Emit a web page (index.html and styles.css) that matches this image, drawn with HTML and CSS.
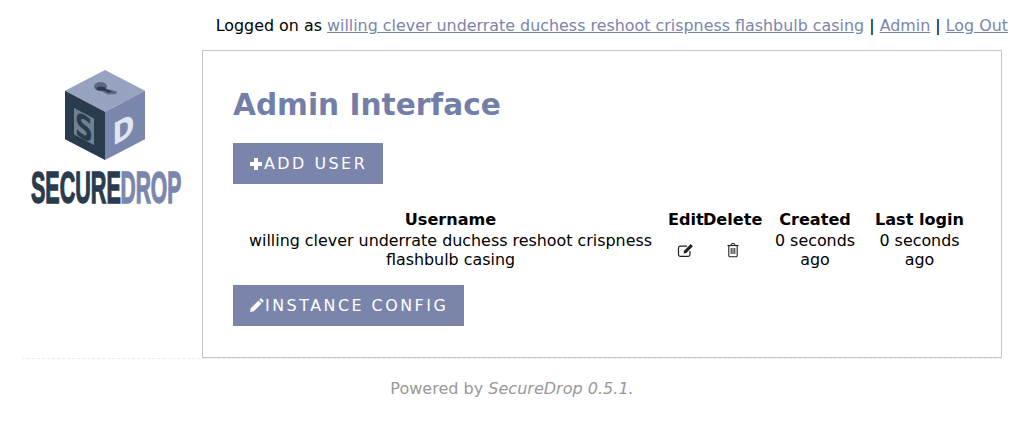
FILE: index.html
```html
<!DOCTYPE html>
<html lang="en">
<head>
<meta charset="utf-8">
<title>SecureDrop | Admin Interface</title>
<link rel="stylesheet" href="styles.css">
</head>
<body>
<header class="topbar">Logged on as <a href="#">willing clever underrate duchess reshoot crispness flashbulb casing</a> | <a href="#">Admin</a> | <a href="#">Log Out</a></header>
<div class="container">
  <aside class="sidebar">
    <svg class="logo" width="180" height="166" viewBox="22 50 180 166" role="img" aria-label="SecureDrop logo">
      <polygon points="105,70 145,90.7 105,111.7 65,90.7" fill="#98a3c1"/>
      <polygon points="65,90.7 105,111.7 105,160 65,139.3" fill="#2a3b4d"/>
      <polygon points="145,90.7 105,111.7 105,160 145,139.3" fill="#7b86ac"/>
      <ellipse cx="100.5" cy="86.5" rx="6.5" ry="4.5" fill="#5a6785"/>
      <polygon points="100,87 117,91.5 116,94 108,94.5 101,91" fill="#5a6785"/>
      <ellipse cx="101" cy="88.5" rx="4.5" ry="2" fill="#2a3b4d"/>
      <polygon points="103,88 112,91.5 109,92.5 103,90" fill="#2a3b4d"/>
      <polygon points="74,108 94,118.5 94,145 74,134.5" fill="#6d8290"/>
      <text class="logo-cube-s" transform="matrix(1.25 0.65 0 1.65 75 134.5)">S</text>
      <text class="logo-cube-d" transform="matrix(1.32 -0.73 0 1.5 112.5 146)">D</text>
      <text class="logo-word logo-dark" transform="matrix(0.49 0 0 1 31 203.3)">SECURE</text>
      <text class="logo-word logo-light" transform="matrix(0.478 0 0 1 120.5 203.3)">DROP</text>
    </svg>
  </aside>
  <main class="panel">
    <h1 class="title">Admin Interface</h1>
    <a class="btn btn-add" href="#">
      <svg class="btn-icon" width="14" height="14" viewBox="0 0 14 14"><path d="M5 1h4v4h4v4H9v4H5V9H1V5h4z" fill="#fff"/></svg>ADD USER
    </a>
    <table class="users">
      <colgroup>
        <col class="col-name"><col class="col-edit"><col class="col-del"><col class="col-created"><col class="col-login">
      </colgroup>
      <thead>
        <tr><th>Username</th><th>Edit</th><th>Delete</th><th>Created</th><th>Last login</th></tr>
      </thead>
      <tbody>
        <tr>
          <td>willing clever underrate duchess reshoot crispness flashbulb casing</td>
          <td><svg width="18" height="16" viewBox="0 0 18 16"><path d="M13 9v3.5a1.8 1.8 0 0 1-1.8 1.8H3.3a1.8 1.8 0 0 1-1.8-1.8V6a1.8 1.8 0 0 1 1.8-1.8H10" fill="none" stroke="#222" stroke-width="1.2"/><path d="M6.5 11.5l.6-2.8 6.6-6.6 2.2 2.2-6.6 6.6z" fill="#222"/></svg></td>
          <td><svg width="14" height="16" viewBox="0 0 14 16"><path d="M5 3l.7-1.5h2.6L9 3" fill="none" stroke="#222" stroke-width="1"/><path d="M1.5 3.5h11" stroke="#222" stroke-width="1.2"/><path d="M2.8 3.5v10a1.2 1.2 0 0 0 1.2 1.2h6a1.2 1.2 0 0 0 1.2-1.2v-10" fill="none" stroke="#222" stroke-width="1.1"/><path d="M5.2 6v6M7 6v6M8.8 6v6" stroke="#222" stroke-width="1"/></svg></td>
          <td>0 seconds ago</td>
          <td>0 seconds ago</td>
        </tr>
      </tbody>
    </table>
    <a class="btn btn-config" href="#">
      <svg class="btn-icon" width="15" height="15" viewBox="0 0 15 15"><path d="M1 14l.8-3.8 7.7-7.7 3 3-7.7 7.7zM10.3 1.7l1-1a1 1 0 0 1 1.4 0l1.6 1.6a1 1 0 0 1 0 1.4l-1 1z" fill="#fff"/></svg>INSTANCE CONFIG
    </a>
  </main>
</div>
<footer class="footer">Powered by <em>SecureDrop 0.5.1.</em></footer>
</body>
</html>
```
FILE: styles.css
```css
* { box-sizing: border-box; }
html, body { margin: 0; padding: 0; }
body {
  background: #fff;
  color: #000;
  font-family: "DejaVu Sans", sans-serif;
  font-size: 15.9px;
  line-height: 19px;
}
a { color: #7b85ab; }
.topbar {
  height: 50px;
  padding: 16px 16px 0 0;
  text-align: right;
}
.container {
  display: flex;
  align-items: flex-start;
  width: 980px;
  margin-left: 22px;
  height: 309px;
  border-bottom: 1px dashed #eee;
}
.sidebar { width: 180px; flex: none; }
.logo { display: block; }
.logo-cube-s { font: bold 20px "DejaVu Sans", sans-serif; fill: #2a3b4d; }
.logo-cube-d { font: bold 20px "DejaVu Sans", sans-serif; fill: #e0e5f0; }
.logo-word { font: bold 44px "Liberation Sans", sans-serif; stroke-width: 1.4px; }
.logo-dark { fill: #2a3b4d; stroke: #2a3b4d; }
.logo-light { fill: #7b86ac; stroke: #7b86ac; }
.panel {
  flex: none;
  width: 800px;
  height: 308px;
  border: 1px solid #c4c4c4;
  padding: 37px 30px 0;
  background: #fff;
}
.title {
  margin: 0 0 21px;
  color: #747fa9;
  font-size: 29.6px;
  line-height: 34px;
  font-weight: bold;
}
.btn {
  display: flex;
  align-items: center;
  gap: 1px;
  width: max-content;
  background: #7b85ab;
  color: #fff;
  text-decoration: none;
  letter-spacing: 2.5px;
  line-height: 19px;
}
.btn-add { height: 41px; padding: 0 16px; }
.btn-config { height: 41px; padding: 0 16px; }
.btn-icon { flex: none; }
.users {
  width: 738px;
  margin: 26px 0 16px;
  border-collapse: collapse;
  table-layout: fixed;
  text-align: center;
}
.users th, .users td { padding: 0; }
.users th { font-size: 16.1px; }
.users td { padding-top: 2px; vertical-align: middle; }
.users svg { display: block; margin: 0 auto; }
.col-name { width: 435px; }
.col-edit { width: 35px; }
.col-del { width: 59px; }
.col-created { width: 106px; }
.col-login { width: 103px; }
.footer {
  margin-top: 20px;
  text-align: center;
  color: #999;
  font-size: 16.04px;
}
```
